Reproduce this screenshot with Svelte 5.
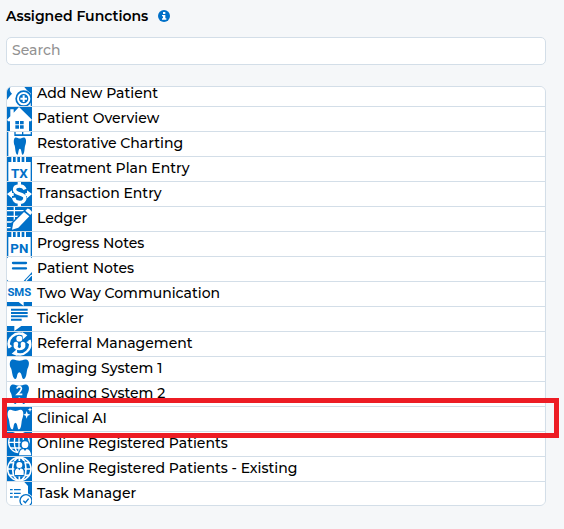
<script>
    import { onMount } from "svelte";

    let search = '';
    let list;

    const functions = [
        { icon: 'add', title: 'Add New Patient' },
        { icon: 'house', title: 'Patient Overview' },
        { icon: 'chart', title: 'Restorative Charting' },
        { icon: 'pad', label: 'TX', title: 'Treatment Plan Entry' },
        { icon: 'dollar', title: 'Transaction Entry' },
        { icon: 'ledger', title: 'Ledger' },
        { icon: 'pad', label: 'PN', title: 'Progress Notes' },
        { icon: 'notes', title: 'Patient Notes' },
        { icon: 'sms', title: 'Two Way Communication' },
        { icon: 'tickler', title: 'Tickler' },
        { icon: 'referral', title: 'Referral Management' },
        { icon: 'tooth', title: 'Imaging System 1' },
        { icon: 'tooth2', title: 'Imaging System 2' },
        { icon: 'ai', title: 'Clinical AI' },
        { icon: 'online', title: 'Online Registered Patients' },
        { icon: 'existing', title: 'Online Registered Patients - Existing' },
        { icon: 'task', title: 'Task Manager' },
    ];

    const tooth = "M14 8C22 5 29 11 37 11S51 5 60 8C69 13 66 27 62 34C58 42 60 62 51 66C43 68 46 47 37 46C28 47 32 68 24 66C15 62 16 42 12 34C7 26 7 12 14 8Z";

    $: shown = functions.filter((f) => f.title.toLowerCase().includes(search.toLowerCase()));

    // the list opens scrolled a little way down
    onMount(() => { list.scrollTop = 5; })
</script>

<style>
    :global(body) { background: #f5f7f9; }

    .panel {
        padding: 6px 18px 23px 6px; color: #000;
        font: 500 14px/20px Montserrat, Inter, sans-serif; }

    .head { display: flex; align-items: center; gap: 10px; }
    .head label { font-weight: 600; }
    .info { display: block; width: 12px; height: 12px; }

    input {
        display: block; width: 100%; height: 28px; margin: 11px 0 21px; padding: 0 5px 2px;
        border: 1px solid #d3dee8; border-radius: 5px; box-sizing: border-box;
        background: #fff; color: #000; font: inherit; }
    input::placeholder { color: #929292; opacity: 1; }

    .wrap { position: relative; }
    ul {
        height: 418px; margin: 0; padding: 0; list-style: none; background: #fff;
        border: 1px solid #d3dee8; border-radius: 6px; overflow-y: auto; scrollbar-width: none; }
    li {
        display: flex; height: 25px; gap: 5px; box-sizing: border-box;
        border-bottom: 1px solid #d3dee8; white-space: nowrap; }
    li span { line-height: 22px; }
    .frame {
        position: absolute; top: 312px; left: -4px; right: -13px; height: 30px;
        border: 5px solid #ed1c24; pointer-events: none; }

    .icon { flex: none; width: 25px; height: 24px; }
    .icon text { font: 700 34px Roboto, sans-serif; text-anchor: middle; fill: #0070c8; }
    .icon .label { font-size: 40px; }
    .b { fill: #0070c8; }
    .w { fill: #fff; }
    .bs { fill: none; stroke: #0070c8; }
    .ws { fill: none; stroke: #fff; }
</style>

<main class="panel">
    <div class="head">
        <label for="search">Assigned Functions</label>
        <svg class="info" viewBox="0 0 36 36" aria-hidden="true">
            <circle class="b" cx="18" cy="18" r="18" />
            <path class="w" d="M15 6h7v6h-7zM12 15h10v10h3v4H12v-4h3v-6h-3z" />
        </svg>
    </div>
    <input id="search" type="text" placeholder="Search" bind:value={search}>

    <div class="wrap">
        <ul bind:this={list}>
            {#each shown as f}
                <li>
                    <svg class="icon" viewBox="0 0 75 72" aria-hidden="true">
                        <rect class="b" width="75" height="72" />
                        {#if f.icon == 'add'}
                            <path class="w" d="M10 15H52L60 25L71 34V72H0V53Q10 39 15 35Q5 28 10 15Z" />
                            <circle class="b" cx="50" cy="50" r="25" />
                            <circle class="ws" cx="50" cy="50" r="17" stroke-width="6" />
                            <path class="ws" d="M50 40v20M40 50h20" stroke-width="6" />
                        {:else if f.icon == 'house'}
                            <path class="w" d="M36 0L75 38L72 43H66V72H9V43H3L0 38L10 28V7H20V17Z" />
                            <path class="b" d="M25 42h11v10H25zM39 42h11v10H39zM25 55h11v10H25zM39 55h11v10H39z" />
                        {:else if f.icon == 'chart'}
                            <path class="w" d="M4 0H22V12H75V72H4Z" />
                            <path class="w" d="M26 0h19v7H26zM49 0h22v7H49z" />
                            <path class="b" d={tooth} transform="translate(15 10) scale(.64 .88)" />
                        {:else if f.icon == 'pad'}
                            <path class="w" d="M4 15H13V0H18V15H26V0H31V15H39V0H44V15H52V0H57V15H71V72H4Z" />
                            <text class="label" x="37" y="63">{f.label}</text>
                        {:else if f.icon == 'dollar'}
                            <path class="ws" d="M54 22Q49 11 36 12C19 13 18 29 34 34C52 39 57 44 52 54C45 66 22 62 20 47M37 0v14M37 59v13" stroke-width="10" />
                            <path class="w" d="M0 36L15 25V33H20V42H15V49ZM75 36L60 25V33H55V42H60V49Z" />
                        {:else if f.icon == 'ledger'}
                            <path class="ws" d="M0 11H55M0 28H40M0 45H27M0 62H18M22 0V60" stroke-width="4" />
                            <path class="b" d="M13 47L55 5Q62 -1 75 10V26L34 68L9 72Z" />
                            <path class="w" d="M19 47L51 15L67 28L34 62L15 68ZM55 11L61 5Q65 3 74 13L75 18L70 24Z" />
                        {:else if f.icon == 'notes'}
                            <path class="w" d="M4 0H71L75 4V45L50 72H4L0 68V4Z" />
                            <path class="bs" d="M18 18H57M18 34H57" stroke-width="7" stroke-linecap="round" />
                            <path class="ws" d="M57 71L74 54" stroke-width="4" />
                        {:else if f.icon == 'sms'}
                            <path class="w" d="M0 0H75V60H50V72L35 60H0Z" />
                            <text x="37" y="41">SMS</text>
                        {:else if f.icon == 'tickler'}
                            <path class="w" d="M0 0H75V57H43L22 72V57H0Z" />
                            <path class="bs" d="M12 8H62M12 18H62M12 28H62M12 38H44" stroke-width="6" />
                        {:else if f.icon == 'referral'}
                            <path class="ws" d="M8 48A31 31 0 0 1 50 8M67 24A31 31 0 0 1 25 64" stroke-width="7" />
                            <path class="w" d="M45 0L61 10L48 22ZM30 51L14 65L31 72ZM2 32L16 43L3 48ZM72 42L58 30L72 25Z" />
                            <circle class="w" cx="37" cy="20" r="9" />
                            <path class="w" d="M20 33Q25 27 31 30L37 39L44 30Q52 28 55 34V45Q50 55 37 55T20 45Z" />
                            <path class="b" d="M35 29h5l2 16-5 4-5-4z" />
                        {:else if f.icon == 'tooth'}
                            <path class="w" d="M0 0H75V72H0Z" />
                            <path class="b" d={tooth} />
                        {:else if f.icon == 'tooth2'}
                            <path class="w" d="M0 0H75V72H0Z" />
                            <path class="b" d={tooth} />
                            <path class="ws" d="M30 20Q31 14 38 14C47 16 44 25 31 37H46" stroke-width="5" />
                        {:else if f.icon == 'ai'}
                            <path class="w" d={tooth} transform="translate(-5 1) scale(.82 1)" />
                            <path class="w" d="M59 12L62 20L70 23L62 26L59 35L56 26L49 23L56 20ZM69 1L71 6L75 8L71 10L69 15L67 10L62 8L67 6Z" />
                        {:else if f.icon == 'online'}
                            <g class="ws" stroke-width="4">
                                <circle cx="36" cy="31" r="31" />
                                <ellipse cx="36" cy="31" rx="14" ry="31" />
                                <path d="M5 31H67M9 14H63M9 48H63M36 0V62" />
                            </g>
                            <circle class="b" cx="54" cy="38" r="15" />
                            <path class="b" d="M31 72Q34 48 54 46Q73 48 75 72Z" />
                            <circle class="w" cx="54" cy="38" r="10" />
                            <path class="w" d="M36 70Q37 52 49 51L54 57L59 51Q70 52 73 70Z" />
                        {:else if f.icon == 'existing'}
                            <g class="ws" stroke-width="5">
                                <circle cx="37" cy="36" r="35" />
                                <ellipse cx="37" cy="36" rx="20" ry="35" />
                                <path d="M2 36H73M8 17H67M8 55H67M37 0V72" />
                            </g>
                            <path class="b" d="M22 12H52V58H22Z" />
                            <circle class="w" cx="37" cy="24" r="9" />
                            <path class="w" d="M24 54V42Q26 35 33 34L37 40L41 34Q49 36 50 42V54Z" />
                        {:else if f.icon == 'task'}
                            <path class="w" d="M0 0H52L63 12V72H0Z" />
                            <path class="bs" d="M9 23h8M21 23h20M9 34h8M21 34h20M9 45h8M21 45h14" stroke-width="4" />
                            <circle class="w" cx="57" cy="56" r="22" />
                            <circle class="bs" cx="57" cy="56" r="18" stroke-width="4" />
                            <path class="bs" d="M49 56L55 62L65 50" stroke-width="4" />
                        {/if}
                    </svg>
                    <span>{f.title}</span>
                </li>
            {/each}
        </ul>
        {#if shown.length == functions.length}
            <div class="frame"></div>
        {/if}
    </div>
</main>
